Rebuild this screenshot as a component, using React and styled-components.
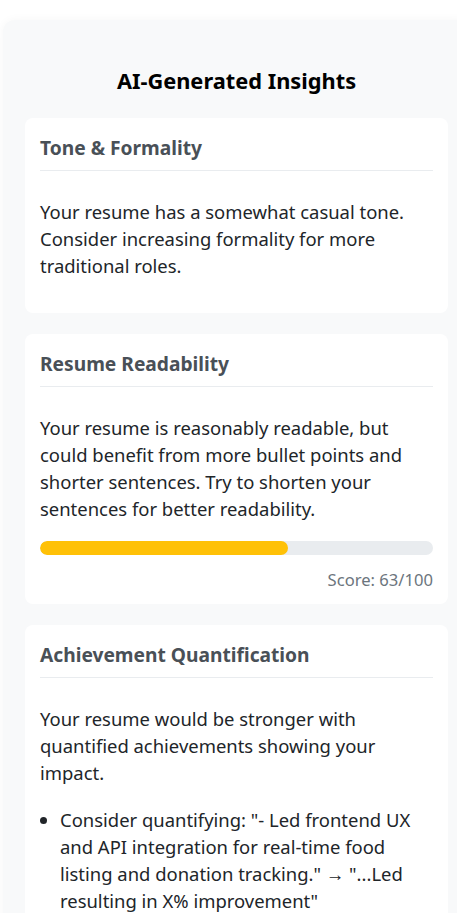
import React from 'react'
import styled, { createGlobalStyle } from 'styled-components'

const GlobalStyle = createGlobalStyle`
  html, body {
    margin: 0;
    padding: 0;
    background: #ffffff;
    overflow-x: hidden;
  }
  body {
    font-family: "Noto Sans", "Open Sans", sans-serif;
    color: #212529;
  }
`

const Page = styled.div`
  padding: 20px 0 0 3px;
`
const Panel = styled.div`
  width: 467px;
  box-sizing: border-box;
  padding: 22px 22px 30px;
  background-color: #f8f9fa;
  border-radius: 12px;
  box-shadow: 0 0 10px rgba(0, 0, 0, 0.04);
`
const Title = styled.h2`
  margin: 27px 0 25px;
  font-size: 21.8px;
  line-height: 24px;
  font-weight: 700;
  text-align: center;
  color: #000000;
`
const Cards = styled.div`
  display: flex;
  flex-direction: column;
  gap: 21px;
`
const Card = styled.div`
  background-color: #ffffff;
  border-radius: 8px;
  padding: 18px 15px 15px;
`
const CardTitle = styled.h3`
  margin: 0;
  padding-bottom: 10px;
  border-bottom: 1px solid #e9ecef;
  font-size: 19.2px;
  line-height: 24px;
  font-weight: 700;
  color: #495057;
`
const Text = styled.p`
  margin: 27px 0 ${props => props.tight ? '0' : '19px'};
  font-size: 18.45px;
  line-height: 27px;
`
const Track = styled.div`
  margin-top: 19px;
  height: 14px;
  border-radius: 7px;
  background-color: #e9ecef;
  overflow: hidden;
`
const Fill = styled.div`
  height: 100%;
  border-radius: 7px;
  background-color: #ffc107;
`
const Score = styled.div`
  margin-top: 15px;
  font-size: 16.6px;
  line-height: 19px;
  text-align: right;
  color: #6c757d;
`
const List = styled.ul`
  margin: 20px 0 16px;
  padding-left: 20px;
  font-size: 18.45px;
  line-height: 27px;
`

const App = () => {
  const score = 63

  return (
    <Page>
      <GlobalStyle />
      <Panel>
        <Title>AI-Generated Insights</Title>
        <Cards>
          <Card>
            <CardTitle>Tone &amp; Formality</CardTitle>
            <Text>
              Your resume has a somewhat casual tone. Consider increasing formality for more traditional roles.
            </Text>
          </Card>
          <Card>
            <CardTitle>Resume Readability</CardTitle>
            <Text tight>
              Your resume is reasonably readable, but could benefit from more bullet points and shorter sentences. Try to shorten your sentences for better readability.
            </Text>
            <Track>
              <Fill style={{ width: `${score}%` }} />
            </Track>
            <Score>Score: {score}/100</Score>
          </Card>
          <Card>
            <CardTitle>Achievement Quantification</CardTitle>
            <Text tight>
              Your resume would be stronger with quantified achievements showing your impact.
            </Text>
            <List>
              <li>
                Consider quantifying: "- Led frontend UX and API integration for real-time food listing and donation tracking." → "...Led resulting in X% improvement"
              </li>
            </List>
          </Card>
        </Cards>
      </Panel>
    </Page>
  )
}

export default App
